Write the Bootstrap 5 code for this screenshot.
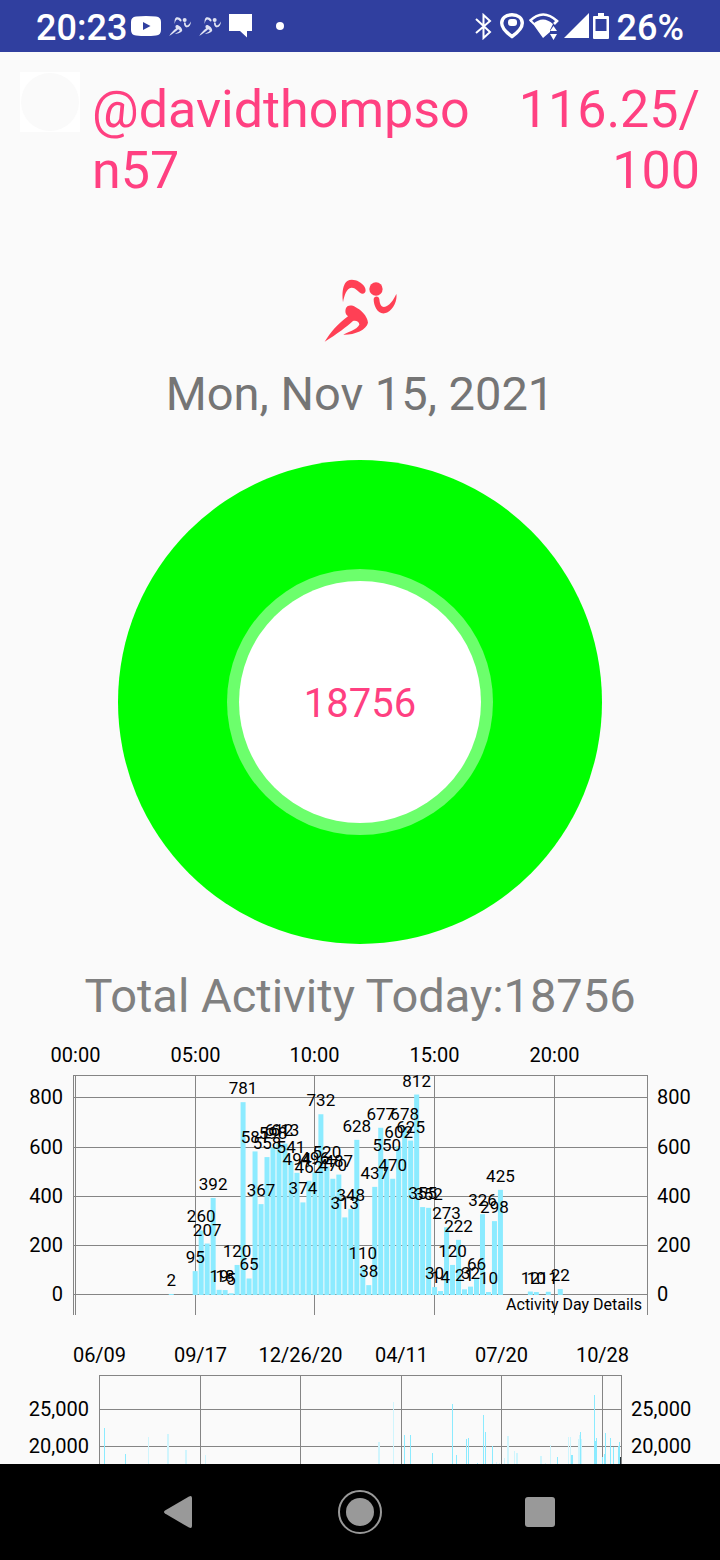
<!DOCTYPE html>
<html lang="en">
<head>
<meta charset="utf-8">
<meta name="viewport" content="width=device-width, initial-scale=1">
<title>Daily activity</title>
<link href="https://cdn.jsdelivr.net/npm/bootstrap@5.3.0/dist/css/bootstrap.min.css" rel="stylesheet">
<style>
body { font-family: Roboto, sans-serif; background: #fafafa; color: #757575; }
.status-bar { background: #303f9f; height: 52px; padding: 0 36px; font-size: 36px; line-height: 52px; font-weight: 500; }
.status-bar svg, .runner, .chart, .nav-key svg { display: block; flex: none; }
.user-row { padding: 20px 20px 0; gap: 12px; }
.avatar { width: 60px; height: 60px; background: #fff; flex: none; }
.avatar span { width: 58px; height: 58px; background: #fafafa; }
.pink-text { color: #ff4081; font-size: 52px; line-height: 61px; margin-top: 7px; }
.user-name { flex: 1 1 0; min-width: 0; }
.user-score { width: 30%; }
.runner { color: #ff4055; margin: 78px auto 0; }
.day-title { font-size: 47px; line-height: 56px; }
.donut { width: 67.2%; aspect-ratio: 1; background: #0f0; margin-top: 38px; }
.donut-rim { width: 55%; height: 55%; background: #6cff6c; }
.donut-hole { width: 91%; height: 91%; background: #fff; color: #ff4081; font-size: 40px; }
.total-line { color: #808080; font-size: 47px; line-height: 56px; margin-top: 24px; margin-bottom: -1px; }
.chart { width: 100%; height: auto; }
.chart text { fill: #000; font-size: 20px; }
.chart .bar-value { font-size: 17px; text-anchor: middle; }
.chart .caption { font-size: 16px; text-anchor: end; }
.chart .mid { text-anchor: middle; }
.chart .end { text-anchor: end; }
.chart .grid-line { stroke: #858585; stroke-width: 1; fill: none; }
.nav-keys { height: 96px; padding: 0 12.5%; }
.nav-key { flex: 1 1 0; background: none; border: 0; padding: 0; color: #999; }
</style>
<script src="https://cdn.jsdelivr.net/npm/bootstrap@5.3.0/dist/js/bootstrap.bundle.min.js"></script>
</head>
<body class="vh-100 d-flex flex-column overflow-hidden">
<svg width="0" height="0" class="position-absolute" aria-hidden="true">
  <symbol id="runner" viewBox="40 40 219 189">
    <path d="M97 110C93 85 96 55 110 46C125 37 150 46 162 64C168 76 164 85 154 84C144 82 136 65 122 66C108 68 101 88 97 110Z"/>
    <circle cx="196" cy="70" r="20"/>
    <path d="M189 101C190 90 204 90 206 100C207 112 210 124 220 124C236 122 248 104 257 85C261 105 246 138 222 143C200 146 189 120 189 101Z"/>
    <path d="M105 130C108 118 122 117 134 124C150 132 170 150 172 171C168 193 130 208 98 207C110 199 138 193 146 177C146 168 134 163 126 167C110 182 80 205 42 228C60 200 80 175 112 152C104 146 103 138 105 130Z"/>
  </symbol>
</svg>

<header class="status-bar d-flex align-items-center justify-content-between text-white flex-shrink-0">
  <div class="d-flex align-items-center">
    <span class="pt-1">20:23</span>
    <svg class="ms-1" width="30" height="20" viewBox="0 0 30 20"><path fill="#fff" fill-rule="evenodd" d="M5 0.5Q15-.5 25 .5Q30 1 30 6V14Q30 19 25 19.5Q15 20.500 5 19.500Q0 19 0 14V6Q0 1 5 .5ZM12 6V14L19.500 10Z"/></svg>
    <svg class="ms-2" width="22" height="19" fill="#dfe2f3"><use href="#runner"/></svg>
    <svg class="ms-2" width="22" height="19" fill="#dfe2f3"><use href="#runner"/></svg>
    <svg class="ms-2" width="23" height="24" viewBox="0 0 23 24"><path fill="#fff" d="M0 0H23V17H18V23.500L11 17H0Z"/></svg>
    <svg class="ms-4" width="8" height="8"><circle cx="4" cy="4" r="4" fill="#fff"/></svg>
  </div>
  <div class="d-flex align-items-center">
    <svg width="17" height="27" viewBox="0 0 17 27" fill="none" stroke="#fff" stroke-width="2"><path d="M1 6L15 19L8.500 25V2L15 8L1 20"/></svg>
    <svg class="ms-2" width="24" height="26" viewBox="0 0 24 26"><path fill="none" stroke="#fff" stroke-width="3.400" d="M12 1.800C18 1.800 22.300 5 22.300 10C22.300 15 17 20 12 23.500C7 20 1.700 15 1.700 10C1.700 5 6 1.800 12 1.800Z"/><rect x="8" y="6" width="9" height="7" rx="3" fill="#fff"/></svg>
    <svg class="ms-1" width="31" height="28" viewBox="0 0 31 28"><path fill="none" stroke="#fff" stroke-width="2.600" d="M1.800 9Q15 -4 29 9L26 12"/><path fill="none" stroke="#fff" stroke-width="2" d="M2 8L6 12"/><path fill="#fff" d="M5 12Q15 3 25 12L22 18V20L15 26Z"/><path fill="#fff" d="M22 19L25.500 14L29 19ZM22 22H29L25.500 28Z"/></svg>
    <svg class="ms-1" width="26" height="26"><path fill="#fff" d="M1 25H26V0Z"/></svg>
    <svg class="ms-1" width="16" height="26" viewBox="0 0 16 26"><path fill="#fff" fill-rule="evenodd" d="M5 0H11V3H15Q16 3 16 4V25Q16 26 15 26H1Q0 26 0 25V4Q0 3 1 3H5ZM2.500 6V18H13.500V6Z"/></svg>
    <span class="ms-2 pt-1">26%</span>
  </div>
</header>

<main class="flex-grow-1 overflow-hidden">
  <div class="user-row d-flex align-items-start">
    <div class="avatar d-flex align-items-center justify-content-center"><span class="rounded-circle"></span></div>
    <div class="user-name pink-text text-break">@davidthompson57</div>
    <div class="user-score pink-text text-end">116.25/<wbr>100</div>
  </div>

  <svg class="runner" width="73" height="63" fill="currentColor" role="img" aria-label="Runner"><use href="#runner"/></svg>
  <div class="day-title text-center mt-4">Mon, Nov 15, 2021</div>

  <div class="donut rounded-circle mx-auto d-flex align-items-center justify-content-center">
    <div class="donut-rim rounded-circle d-flex align-items-center justify-content-center">
      <div class="donut-hole rounded-circle d-flex align-items-center justify-content-center pt-1">18756</div>
    </div>
  </div>

  <div class="total-line text-center">Total Activity Today:18756</div>

  <svg class="chart" id="day-chart" viewBox="0 1023 720 307" role="img" aria-label="Activity day details"></svg>
  <svg class="chart" id="history-chart" viewBox="0 1330 720 134" role="img" aria-label="Activity history"></svg>
</main>

<nav class="nav-keys d-flex align-items-center bg-black flex-shrink-0" aria-label="System">
  <button class="nav-key d-flex justify-content-center" type="button" aria-label="Back"><svg width="32" height="34" viewBox="0 0 32 34"><path fill="currentColor" d="M1 15.500L25 1.400Q28 0 28 3V31Q28 34 25 32.600L1 18.500Q-1 17 1 15.500Z"/></svg></button>
  <button class="nav-key d-flex justify-content-center" type="button" aria-label="Home"><svg width="44" height="44"><circle cx="22" cy="22" r="21" fill="none" stroke="currentColor" stroke-width="2"/><circle cx="22" cy="22" r="14" fill="currentColor"/></svg></button>
  <button class="nav-key d-flex justify-content-center" type="button" aria-label="Recent apps"><svg width="30" height="30"><rect width="30" height="30" rx="3" fill="currentColor"/></svg></button>
</nav>

<script>
const line = (x1, y1, x2, y2) => `<path class="grid-line" d="M${x1} ${y1}L${x2} ${y2}"/>`;
const label = (x, y, t, c) => `<text x="${x}" y="${y}" class="${c}">${t}</text>`;
const bar = (x, y, w, h, c) => `<rect x="${x}" y="${y}" width="${w}" height="${h}" fill="${c}"/>`;

// Steps per quarter hour: [quarter index, steps]
const steps = [[16, 2], [76, 12], [77, 10], [79, 11], [81, 22]];
[95, 260, 207, 392, 19, 18, 5, 120, 781, 65, 581, 367, 558, 598, 612, 613, 541, 494, 374, 462,
 496, 732, 520, 470, 487, 313, 348, 628, 110, 38, 437, 677, 550, 470, 602, 678, 625, 812, 355, 352,
 30, 14, 273, 120, 222, 21, 32, 66, 326, 10, 298, 425].forEach((v, i) => steps.push([20 + i, v]));

let day = '';
[[1097.5, 800], [1147.5, 600], [1196.5, 400], [1245.5, 200], [1294.5, 0]].forEach(([y, v]) => {
  day += line(73, y, 648, y) + label(63, y + 6.5, v, 'end') + label(657, y + 6.5, v, '');
});
day += line(73, 1075.5, 648, 1075.5) + line(73.5, 1075, 73.5, 1315) + line(647.5, 1075, 647.5, 1315);
[[75.5, '00:00'], [195.5, '05:00'], [314.5, '10:00'], [434.5, '15:00'], [554.5, '20:00']].forEach(([x, t]) => {
  day += line(x, 1075, x, 1315) + label(x, 1062, t, 'mid');
});
const quarterX = k => 75.5 + k * 5.985;
const stepY = v => 1294.5 - v * 0.24625;
steps.forEach(([k, v]) => day += bar(quarterX(k) - 2.5, stepY(v), 5, v * 0.24625 + 0.5, '#8cebff'));
steps.forEach(([k, v]) => day += label(quarterX(k), stepY(v) - 8, v, 'bar-value'));
day += label(642, 1310, 'Activity Day Details', 'caption');
document.getElementById('day-chart').innerHTML = day;

// Daily totals: [x, top, tone, width]
const strong = '#8cebff', pale = '#d0f5fd', dark = '#263238';
const totals = [
  [104, 1428, strong], [125, 1454, strong], [148, 1437, pale], [167, 1434, pale, 2], [185, 1450, pale, 2], [205, 1455, pale],
  [378, 1442, pale, 2], [393, 1402, pale], [404, 1435, strong], [410, 1435, strong], [432, 1453, strong], [452, 1404, strong],
  [456, 1455, strong], [466, 1439, strong], [468, 1438, strong], [477, 1463, strong], [483, 1415, strong], [485, 1432, strong],
  [492, 1446, strong], [496, 1462, pale], [499, 1463, pale], [504, 1458, pale], [507, 1436, pale, 2], [514, 1451, pale],
  [516, 1453, pale, 2], [540, 1456, pale, 2], [545, 1463, pale], [550, 1445, pale], [557, 1457, strong], [568, 1437, pale],
  [570, 1437, pale], [571, 1455, strong, 2], [578, 1439, pale], [579, 1435, pale], [580, 1432, strong], [581, 1439, pale],
  [594, 1395, strong], [595, 1441, strong], [596, 1438, strong], [602, 1457, strong], [604, 1454, strong], [605, 1433, strong],
  [610, 1438, strong], [613, 1447, strong], [618, 1446, strong], [619, 1442, strong], [620, 1457, dark]
];
let history = line(99, 1375.5, 622, 1375.5) + line(621.5, 1375, 621.5, 1464);
[[1409.5, '25,000'], [1446.5, '20,000']].forEach(([y, t]) => {
  history += line(99, y, 622, y) + label(89, y + 6.5, t, 'end') + label(631, y + 6.5, t, '');
});
[[99.5, '06/09'], [200.5, '09/17'], [300.5, '12/26/20'], [401.5, '04/11'], [501.5, '07/20'], [602.5, '10/28']].forEach(([x, t]) => {
  history += line(x, 1375, x, 1464) + label(x, 1362, t, 'mid');
});
totals.forEach(([x, y, c, w = 1]) => history += bar(x, y, w, 1464 - y, c));
document.getElementById('history-chart').innerHTML = history;
</script>
</body>
</html>
